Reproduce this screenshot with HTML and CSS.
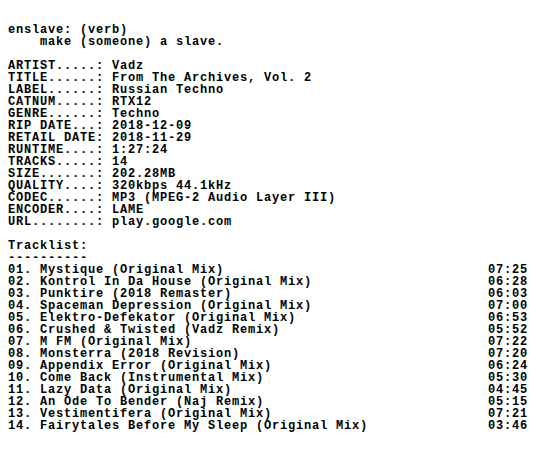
FILE: index.html
```html
<!DOCTYPE html>
<html>
<head>
<meta charset="utf-8">
<link rel="stylesheet" href="styles.css">
</head>
<body>
<main class="nfo">
<pre class="block">enslave: (verb)
    make (someone) a slave.</pre>
<pre class="block">ARTIST.....: Vadz
TITLE......: From The Archives, Vol. 2
LABEL......: Russian Techno
CATNUM.....: RTX12
GENRE......: Techno
RIP DATE...: 2018-12-09
RETAIL DATE: 2018-11-29
RUNTIME....: 1:27:24
TRACKS.....: 14
SIZE.......: 202.28MB
QUALITY....: 320kbps 44.1kHz
CODEC......: MP3 (MPEG-2 Audio Layer III)
ENCODER....: LAME
URL........: play.google.com</pre>
<section class="tracklist">
<h2 class="heading">Tracklist:</h2>
<div class="rule">----------</div>
<ol class="tracks">
<li class="track"><span>01. Mystique (Original Mix)</span><span>07:25</span></li>
<li class="track"><span>02. Kontrol In Da House (Original Mix)</span><span>06:28</span></li>
<li class="track"><span>03. Punktire (2018 Remaster)</span><span>06:03</span></li>
<li class="track"><span>04. Spaceman Depression (Original Mix)</span><span>07:00</span></li>
<li class="track"><span>05. Elektro-Defekator (Original Mix)</span><span>06:53</span></li>
<li class="track"><span>06. Crushed &amp; Twisted (Vadz Remix)</span><span>05:52</span></li>
<li class="track"><span>07. M FM (Original Mix)</span><span>07:22</span></li>
<li class="track"><span>08. Monsterra (2018 Revision)</span><span>07:20</span></li>
<li class="track"><span>09. Appendix Error (Original Mix)</span><span>06:24</span></li>
<li class="track"><span>10. Come Back (Instrumental Mix)</span><span>05:30</span></li>
<li class="track"><span>11. Lazy Data (Original Mix)</span><span>04:45</span></li>
<li class="track"><span>12. An Ode To Bender (Naj Remix)</span><span>05:15</span></li>
<li class="track"><span>13. Vestimentifera (Original Mix)</span><span>07:21</span></li>
<li class="track"><span>14. Fairytales Before My Sleep (Original Mix)</span><span>03:46</span></li>
</ol>
</section>
</main>
</body>
</html>
```

FILE: styles.css
```css
html, body {
  background: #ffffff;
}
body {
  margin: 0;
  padding: 24px 8px 0 8px;
  color: #000000;
  font-family: "Liberation Mono", "DejaVu Sans Mono", monospace;
  font-size: 12px;
  letter-spacing: 0.8px;
  font-weight: bold;
  line-height: 12px;
}
.nfo {
  display: flex;
  flex-direction: column;
  gap: 12px;
}
.block {
  margin: 0;
  font: inherit;
  white-space: pre;
}
.tracklist {
  display: flex;
  flex-direction: column;
}
.heading {
  margin: 0;
  font: inherit;
}
.rule {
  white-space: pre;
}
.tracks {
  list-style: none;
  margin: 0;
  padding: 0;
}
.track {
  display: flex;
  justify-content: space-between;
  width: 520px;
  white-space: pre;
}
```
